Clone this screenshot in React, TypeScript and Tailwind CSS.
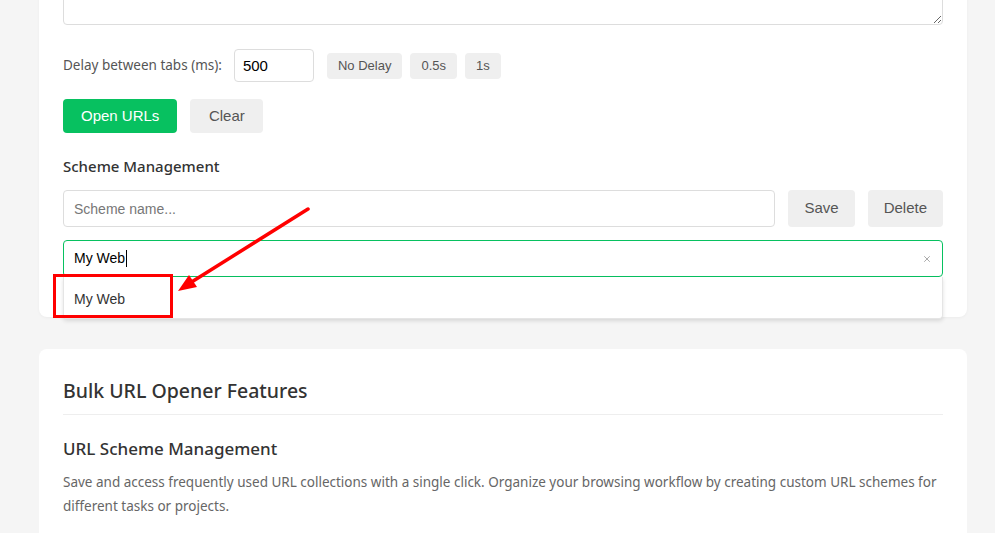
import { X } from "lucide-react";

const ui = "font-['Noto_Sans','Open_Sans',sans-serif]";
const ctl = "font-['Liberation_Sans',Arial,sans-serif]";

function GrayButton({ label, small }: { label: string; small?: boolean }) {
  return (
    <button
      className={`${ctl} rounded bg-[#efefef] text-[#555] ${
        small ? "h-[26px] px-[11px] text-[13px]" : "h-[37px] px-4 text-[15px]"
      }`}
    >
      {label}
    </button>
  );
}

export default function App() {
  return (
    <div className="relative h-[533px] overflow-hidden bg-[#f5f5f5]">
      <div className="pl-[39px] pr-[28px]">
        {/* Tool card (scrolled, top cut off) */}
        <div className="-mt-[99px] rounded-lg bg-white px-6 pt-6 pb-10 shadow-[0_1px_3px_rgba(0,0,0,0.04)]">
          <textarea
            className={`${ctl} block h-[100px] w-full rounded border border-[#ddd] text-[14px]`}
            defaultValue=""
          />

          {/* Delay row */}
          <div className="mt-6 flex items-center">
            <span className={`${ui} text-[13.5px] text-[#555]`}>Delay between tabs (ms):</span>
            <input
              className={`${ctl} ml-3 h-[33px] w-[80px] rounded border border-[#ddd] px-2 text-[15px] text-black`}
              defaultValue="500"
            />
            <div className="ml-[13px] flex gap-2">
              <GrayButton label="No Delay" small />
              <GrayButton label="0.5s" small />
              <GrayButton label="1s" small />
            </div>
          </div>

          {/* Actions */}
          <div className="mt-[17px] flex gap-[13px]">
            <button className={`${ctl} h-[34px] rounded bg-[#07c160] px-[18px] text-[15px] text-white`}>
              Open URLs
            </button>
            <button className={`${ctl} h-[34px] w-[73px] rounded bg-[#efefef] text-[15px] text-[#555]`}>
              Clear
            </button>
          </div>

          <h3 className={`${ui} mt-[23px] text-[15px] font-medium leading-5 text-[#333]`}>
            Scheme Management
          </h3>

          <div className="mt-[14px] flex gap-[13px]">
            <input
              className={`${ctl} h-[37px] flex-1 rounded border border-[#ddd] px-[10px] text-[14px] placeholder:text-[#777]`}
              placeholder="Scheme name..."
            />
            <GrayButton label="Save" />
            <GrayButton label="Delete" />
          </div>

          {/* Scheme selector with suggestion list */}
          <div className="relative mt-[13px]">
            <div className="flex h-[37px] items-center rounded border border-[#07c160] px-[10px]">
              <span className={`${ctl} text-[14px] text-black`}>My Web</span>
              <span className="ml-px h-[17px] w-px bg-black" />
              <X size={10} className="ml-auto text-[#999]" strokeWidth={2} />
            </div>
            <div className="absolute left-0 right-0 top-full z-10 h-[42px] rounded-b border border-t-0 border-[#e5e5e5] bg-white px-[10px] shadow-[0_2px_4px_rgba(0,0,0,0.12)]">
              <div className={`${ctl} pt-[12px] text-[14px] text-[#333]`}>My Web</div>
            </div>
          </div>
        </div>

        {/* Features card */}
        <div className="mt-8 rounded-lg bg-white px-6 pt-7 pb-10">
          <h2 className={`${ui} border-b border-[#eee] pb-[9px] text-[19.5px] font-medium leading-[28px] text-[#333]`}>
            Bulk URL Opener Features
          </h2>
          <h3 className={`${ui} mt-[21px] text-[17px] font-medium leading-[26px] text-[#333]`}>
            URL Scheme Management
          </h3>
          <p className={`${ui} mt-[8px] text-[13.5px] leading-6 text-[#666]`}>
            Save and access frequently used URL collections with a single click. Organize your browsing workflow
            by creating custom URL schemes for different tasks or projects.
          </p>
        </div>
      </div>

      {/* Annotation overlay */}
      <svg className="pointer-events-none absolute left-0 top-0 z-20" width={995} height={533}>
        <rect x={54.5} y={275.5} width={117} height={41} fill="none" stroke="#ff0000" strokeWidth={3} />
        <line x1={308} y1={209} x2={190} y2={283} stroke="#ff0000" strokeWidth={3.5} strokeLinecap="round" />
        <polygon points="178,291 189,275 197,287" fill="#ff0000" />
      </svg>
    </div>
  );
}
